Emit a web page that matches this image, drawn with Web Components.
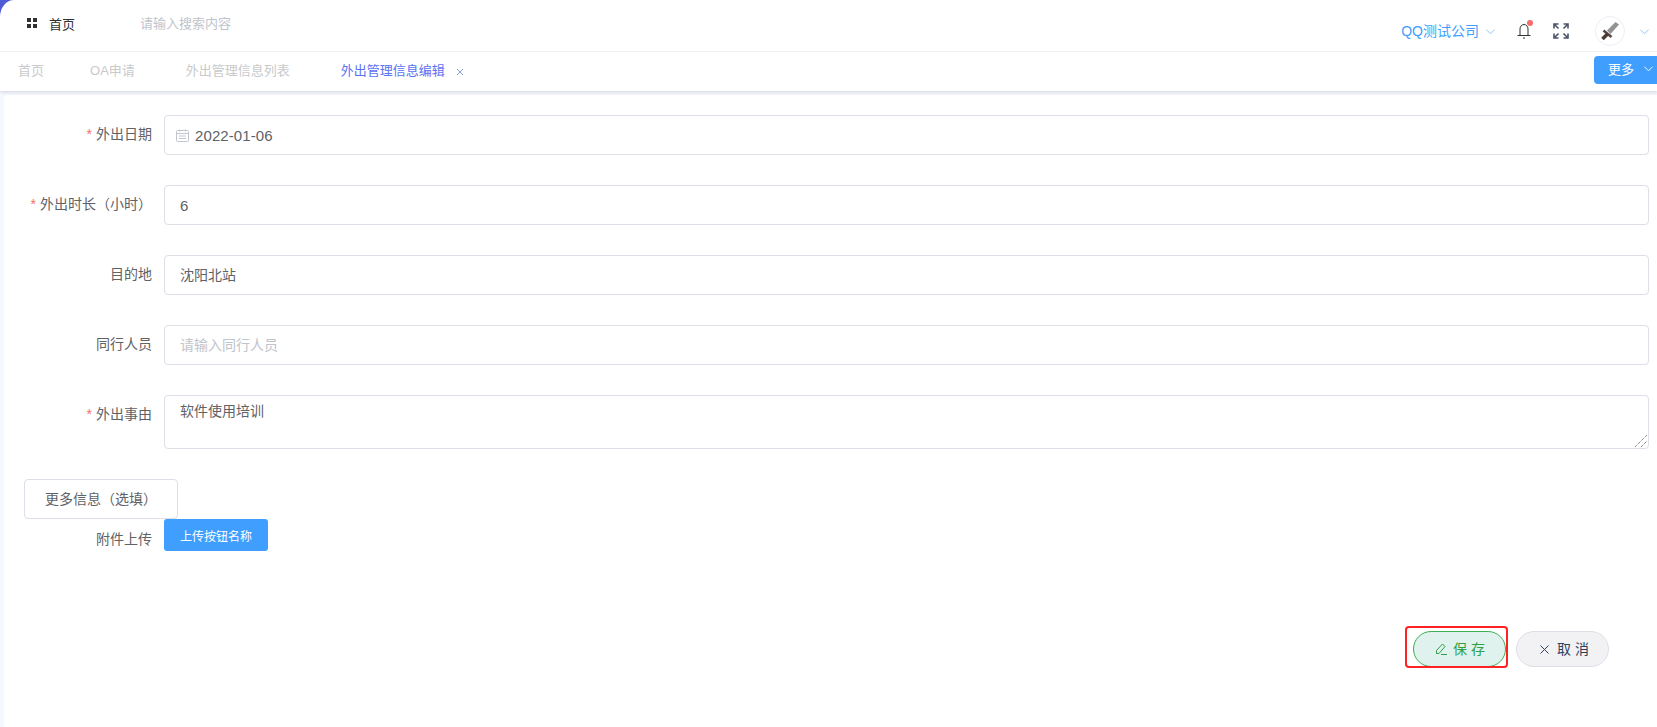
<!DOCTYPE html>
<html lang="zh">
<head>
<meta charset="utf-8">
<title>外出管理信息编辑</title>
<style>
  html, body { margin: 0; height: 100%; }
  body {
    background: #f5f8ff;
    overflow: hidden;
    font: 14px "Liberation Sans", "Noto Sans CJK SC", sans-serif;
    color: #606266;
  }
</style>
</head>
<body>
<app-shell>
  <app-topbar></app-topbar>
  <app-tabs></app-tabs>
  <edit-form></edit-form>
</app-shell>

<script>
const chevron = (size, color) => `<svg width="${size}" height="${size}" viewBox="0 0 12 12" fill="none" stroke="${color}" stroke-width="1"><path d="M1.5 4l4.5 4.5L10.500 4"/></svg>`;

class AppShell extends HTMLElement {
  constructor() {
    super();
    this.attachShadow({mode: 'open'}).innerHTML = `
      <style>
        :host { display: flex; flex-direction: column; height: 727px; }
      </style>
      <slot></slot>
    `;
  }
}

class AppTopbar extends HTMLElement {
  constructor() {
    super();
    this.attachShadow({mode: 'open'}).innerHTML = `
      <style>
        :host { display: block; background: linear-gradient(90deg, #4f5bd5 20px, #fff 20px); }
        .bar {
          display: flex; align-items: flex-start; height: 51px; background: #fff;
          border-top-left-radius: 14px 17px; border-bottom: 1px solid #f0f1f4;
        }
        .home { display: flex; align-items: center; gap: 12px; margin: 13px 0 0 27px; height: 20px; color: #303133; font-size: 13px; }
        .search { margin: 14px 0 0 65px; height: 20px; line-height: 20px; color: #c0c4cc; font-size: 13px; }
        .right { margin-left: auto; display: flex; align-items: center; height: 51px; padding-top: 11px; box-sizing: border-box; }
        .company { color: #409eff; font-size: 14px; display: flex; align-items: center; gap: 6px; }
        .company span { margin-top: -3px; }
        .bell { position: relative; display: flex; margin-left: 21px; }
        .dot { position: absolute; top: -3px; right: -2px; width: 6px; height: 6px; border-radius: 50%; background: #f56c6c; }
        .full { display: flex; margin-left: 22px; }
        .avatar {
          width: 30px; height: 30px; box-sizing: border-box; border: 1px solid #ebeef5; border-radius: 50%;
          margin-left: 26px; display: flex; align-items: center; justify-content: center;
        }
        .last { margin: 0 7px 0 14px; display: flex; }
      </style>
      <div class="bar">
        <div class="home">
          <svg width="10" height="10" viewBox="0 0 10 10" fill="#303133"><rect width="4" height="4"/><rect x="6" width="4" height="4"/><rect y="6" width="4" height="4"/><rect x="6" y="6" width="4" height="4"/></svg>
          <span>首页</span>
        </div>
        <div class="search">请输入搜索内容</div>
        <div class="right">
          <div class="company"><span>QQ测试公司</span>${chevron(11, '#8fbcfb')}</div>
          <div class="bell">
            <svg width="14" height="16" viewBox="0 0 14 16" fill="none" stroke="#303133"><path d="M3 12.500V6a4 4.500 0 0 1 8 0v6.500M.5 12.500h13M6 15h2"/></svg>
            <i class="dot"></i>
          </div>
          <div class="full">
            <svg width="16" height="16" viewBox="0 0 16 16" fill="none" stroke="#4a5568" stroke-width="1.600"><path d="M1 5.500V1h4.500M1 1l4.500 4.500M15 5.500V1h-4.500M15 1l-4.500 4.500M1 10.500V15h4.500M1 15l4.500-4.500M15 10.500V15h-4.500M15 15l-4.500-4.500"/></svg>
          </div>
          <div class="avatar">
            <svg width="22" height="22" viewBox="0 0 22 22" fill="none">
              <path d="M8 10.500L16.500 2l3.500 2.500L11.500 14z" fill="#939393"/>
              <path d="M4.500 10.500l8 6.500" stroke="#55453f" stroke-width="2.500"/>
              <path d="M8.500 14l-5 5" stroke="#4a3a33" stroke-width="3.500"/>
            </svg>
          </div>
          <div class="last">${chevron(11, '#8fbcfb')}</div>
        </div>
      </div>
    `;
  }
}

class AppTabs extends HTMLElement {
  constructor() {
    super();
    this.attachShadow({mode: 'open'}).innerHTML = `
      <style>
        :host {
          display: flex; align-items: center; height: 39px; background: #fff;
          box-shadow: 0 2px 3px rgba(0,0,0,.1); position: relative; font-size: 13px;
          padding: 0 0 4px 18px; box-sizing: border-box; color: #c9cacc;
        }
        span { display: block; margin-right: 51px; white-space: nowrap; }
        span:first-of-type { margin-right: 46px; }
        .on { color: #5b72f2; margin-right: 7px; }
        .x { color: #8c97ee; margin: 4px 0 0 4px; display: flex; }
        .more {
          margin: 0 0 0 auto; width: 63px; height: 28px; background: #409eff; color: #fff; border-radius: 4px 0 0 4px;
          display: flex; align-items: center; justify-content: center; gap: 9px; font-size: 13px; box-sizing: border-box; padding: 0 0 2px 11px;
        }
      </style>
      <span>首页</span><span>OA申请</span><span>外出管理信息列表</span>
      <span class="on">外出管理信息编辑</span>
      <div class="x"><svg width="8" height="8" viewBox="0 0 8 8" stroke="#8c97ee" fill="none"><path d="M1 1l6 6M7 1L1 7"/></svg></div>
      <div class="more"><b style="font-weight:400">更多</b>${chevron(11, '#fff')}</div>
    `;
  }
}

class FormRow extends HTMLElement {
  constructor() {
    super();
    this.attachShadow({mode: 'open'}).innerHTML = `
      <style>
        :host { display: flex; margin-bottom: 30px; }
        label { width: 148px; flex: none; text-align: right; line-height: 38px; height: 40px; margin-right: 12px; white-space: nowrap; font-size: 14px; }
        i { color: #f56c6c; font-style: normal; margin-right: 4px; }
        .ctl { flex: 1; min-width: 0; }
      </style>
      <label></label>
      <div class="ctl"><slot></slot></div>
    `;
  }
  connectedCallback() {
    const label = this.shadowRoot.querySelector('label');
    label.textContent = this.getAttribute('label');
    if (this.hasAttribute('required')) {
      const star = document.createElement('i');
      star.textContent = '*';
      label.prepend(star);
    }
  }
}

class TextField extends HTMLElement {
  constructor() {
    super();
    this.attachShadow({mode: 'open'}).innerHTML = `
      <style>
        :host {
          display: flex; align-items: center; gap: 6px; height: 40px; box-sizing: border-box;
          border: 1px solid #dcdfe6; border-radius: 4px; background: #fff; padding: 0 15px 2px;
          color: #606266; font-size: 14px;
        }
        :host([num]) { font-size: 15px; padding-bottom: 0; }
        :host([date]) { padding-left: 11px; letter-spacing: .1px; }
        :host([placeholder]) { color: #c0c4cc; }
        svg { display: none; }
        :host([date]) svg { display: block; }
      </style>
      <svg width="13" height="13" viewBox="0 0 13 13" fill="none" stroke="#c0c4cc"><rect x=".5" y="1.500" width="12" height="11" rx="1"/><path d="M.5 4.500h12M3 7h7M3 9.500h7M3.500 .5v2M9.500 .5v2"/></svg>
      <slot></slot>
    `;
  }
}

class TextBox extends HTMLElement {
  constructor() {
    super();
    this.attachShadow({mode: 'open'}).innerHTML = `
      <style>
        :host {
          display: block; position: relative; height: 54px; box-sizing: border-box;
          border: 1px solid #dcdfe6; border-radius: 4px; background: #fff; padding: 5px 15px;
          color: #606266; font-size: 14px; line-height: 20px;
        }
        svg { position: absolute; right: 1px; bottom: 1px; }
      </style>
      <slot></slot>
      <svg width="12" height="12" viewBox="0 0 12 12" fill="none" stroke="#555" stroke-dasharray="1 1"><path d="M0 12L12 0M6 12l6-6"/></svg>
    `;
  }
}

class PillButton extends HTMLElement {
  constructor() {
    super();
    this.attachShadow({mode: 'open'}).innerHTML = `
      <style>
        :host {
          display: flex; align-items: center; gap: 8px; position: relative;
          width: 93px; height: 36px; box-sizing: border-box; border-radius: 18px;
          border: 1px solid #dcdfe6; background: #f2f2f4; color: #303f5c;
          font-size: 14px; letter-spacing: 4px; padding: 0 0 2px 23px;
        }
        :host([kind="save"]) { border-color: #3fae52; background: #e0f2ee; color: #2fa045; padding-left: 20px; gap: 5px; }
        ::slotted(svg) { display: block; margin-top: 2px; }
      </style>
      <slot name="icon"></slot><slot></slot>
    `;
  }
}

class EditForm extends HTMLElement {
  constructor() {
    super();
    this.attachShadow({mode: 'open'}).innerHTML = `
      <style>
        :host {
          display: block; flex: 1; margin: 4px 0 0 4px; background: #fff;
          border-radius: 4px 0 0 0; padding: 20px 8px 0 0; box-sizing: border-box;
        }
        .more-info {
          width: 154px; height: 40px; box-sizing: border-box; margin-left: 20px; padding-bottom: 2px;
          border: 1px solid #dcdfe6; border-radius: 4px; display: flex; align-items: center; justify-content: center;
          font-size: 14px;
        }
        .upload-row { display: flex; height: 32px; }
        .upload-row label { width: 148px; text-align: right; margin-right: 12px; line-height: 40px; font-size: 14px; }
        .upload {
          width: 104px; height: 32px; background: #409eff; color: #fff; border-radius: 3px;
          display: flex; align-items: center; justify-content: center; font-size: 12px;
        }
        .actions { display: flex; justify-content: flex-end; gap: 10px; margin-top: 80px; padding-right: 40px; }
        .mark { position: relative; }
        .mark::after {
          content: ""; position: absolute; left: -8px; right: -2px; top: -5px; bottom: -1px;
          border: 2px solid #ff2222; border-radius: 4px;
        }
      </style>
      <form-row label="外出日期" required><text-field num date>2022-01-06</text-field></form-row>
      <form-row label="外出时长（小时）" required><text-field num>6</text-field></form-row>
      <form-row label="目的地"><text-field>沈阳北站</text-field></form-row>
      <form-row label="同行人员"><text-field placeholder>请输入同行人员</text-field></form-row>
      <form-row label="外出事由" required><text-box>软件使用培训</text-box></form-row>
      <div class="more-info">更多信息（选填）</div>
      <div class="upload-row"><label>附件上传</label><div class="upload">上传按钮名称</div></div>
      <div class="actions">
        <div class="mark">
          <pill-button kind="save">
            <svg slot="icon" width="14" height="14" viewBox="0 0 14 14" fill="none" stroke="#2fa045"><path d="M2.500 11.500V8.500L8.500 2l2.500 2.500-6 7zM7 12.500h6"/></svg>
            保存
          </pill-button>
        </div>
        <pill-button>
          <svg slot="icon" width="9" height="9" viewBox="0 0 9 9" fill="none" stroke="#303f5c"><path d="M.5 .5l8 8M8.500 .5l-8 8"/></svg>
          取消
        </pill-button>
      </div>
    `;
  }
}

customElements.define('app-shell', AppShell);
customElements.define('app-topbar', AppTopbar);
customElements.define('app-tabs', AppTabs);
customElements.define('form-row', FormRow);
customElements.define('text-field', TextField);
customElements.define('text-box', TextBox);
customElements.define('pill-button', PillButton);
customElements.define('edit-form', EditForm);
</script>
</body>
</html>
